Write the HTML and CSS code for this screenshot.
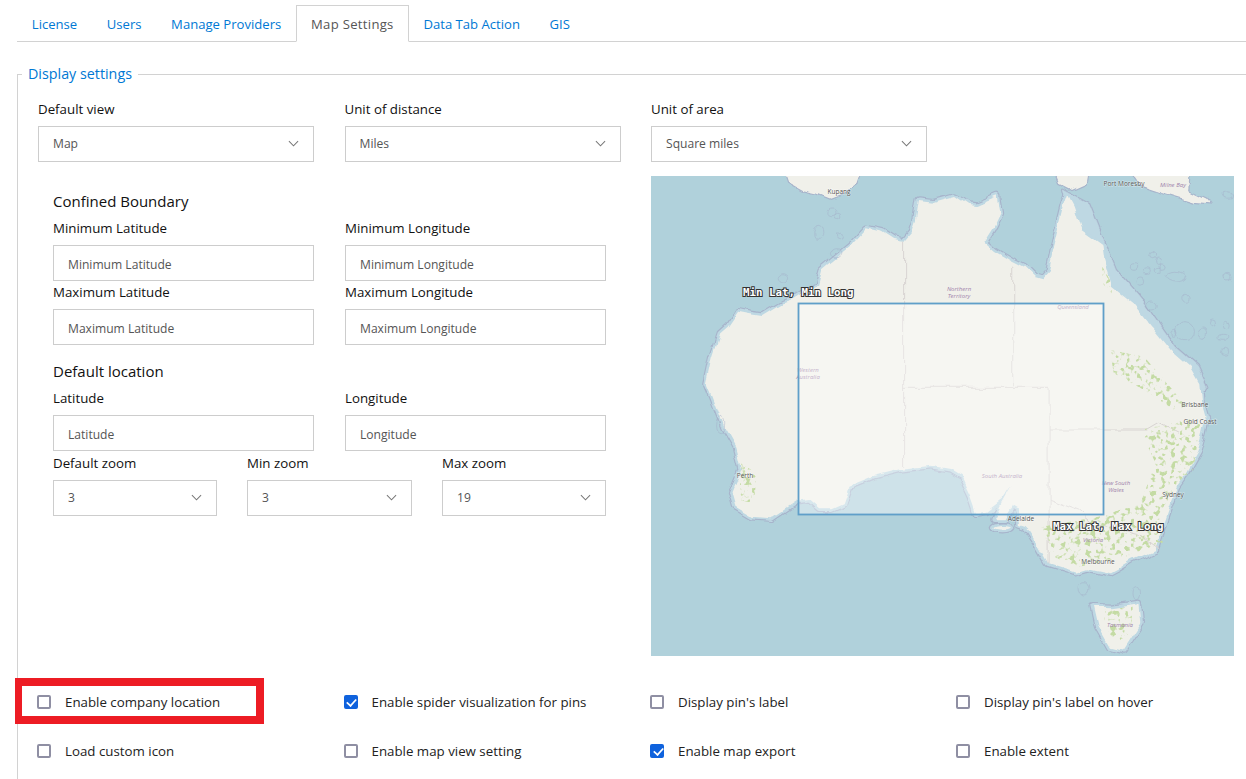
FILE: index.html
```html
<!DOCTYPE html>
<html lang="en">
<head>
<meta charset="utf-8">
<title>Map Settings</title>
<link rel="stylesheet" href="styles.css">
</head>
<body>
<nav class="tabs">
  <a class="tab">License</a>
  <a class="tab">Users</a>
  <a class="tab">Manage Providers</a>
  <a class="tab active">Map Settings</a>
  <a class="tab">Data Tab Action</a>
  <a class="tab">GIS</a>
</nav>
<fieldset class="panel">
  <legend class="legend">Display settings</legend>
  <div class="units">
    <div class="field wide"><label class="label">Default view</label>
      <div class="select"><span>Map</span><svg class="chev" viewBox="0 0 12 7"><path d="M1 1l5 5 5-5"/></svg></div></div>
    <div class="field wide"><label class="label">Unit of distance</label>
      <div class="select"><span>Miles</span><svg class="chev" viewBox="0 0 12 7"><path d="M1 1l5 5 5-5"/></svg></div></div>
    <div class="field wide"><label class="label">Unit of area</label>
      <div class="select"><span>Square miles</span><svg class="chev" viewBox="0 0 12 7"><path d="M1 1l5 5 5-5"/></svg></div></div>
  </div>
  <div class="middle">
    <div class="bounds">
      <h3 class="heading first">Confined Boundary</h3>
      <div class="pair">
        <div class="field"><label class="label">Minimum Latitude</label><input class="input" placeholder="Minimum Latitude"></div>
        <div class="field"><label class="label">Minimum Longitude</label><input class="input" placeholder="Minimum Longitude"></div>
      </div>
      <div class="pair">
        <div class="field"><label class="label">Maximum Latitude</label><input class="input" placeholder="Maximum Latitude"></div>
        <div class="field"><label class="label">Maximum Longitude</label><input class="input" placeholder="Maximum Longitude"></div>
      </div>
      <h3 class="heading">Default location</h3>
      <div class="pair">
        <div class="field"><label class="label">Latitude</label><input class="input" placeholder="Latitude"></div>
        <div class="field"><label class="label">Longitude</label><input class="input" placeholder="Longitude"></div>
      </div>
      <div class="zooms">
        <div class="field"><label class="label">Default zoom</label>
          <div class="select"><span>3</span><svg class="chev" viewBox="0 0 12 7"><path d="M1 1l5 5 5-5"/></svg></div></div>
        <div class="field"><label class="label">Min zoom</label>
          <div class="select"><span>3</span><svg class="chev" viewBox="0 0 12 7"><path d="M1 1l5 5 5-5"/></svg></div></div>
        <div class="field"><label class="label">Max zoom</label>
          <div class="select"><span>19</span><svg class="chev" viewBox="0 0 12 7"><path d="M1 1l5 5 5-5"/></svg></div></div>
      </div>
    </div>
    <svg class="map" viewBox="0 0 583 480" role="img" aria-label="Map of Australia">
      <defs>
        <filter id="rough" filterUnits="userSpaceOnUse" x="-30" y="-30" width="643" height="540" color-interpolation-filters="sRGB">
          <feTurbulence type="fractalNoise" baseFrequency="0.045" numOctaves="3" seed="4" result="n"/>
          <feDisplacementMap in="SourceGraphic" in2="n" scale="9" xChannelSelector="R" yChannelSelector="G"/>
          <feGaussianBlur stdDeviation="0.45"/>
        </filter>
        <filter id="speckle" filterUnits="userSpaceOnUse" x="-30" y="-30" width="643" height="540" color-interpolation-filters="sRGB">
          <feTurbulence type="fractalNoise" baseFrequency="0.2" numOctaves="2" seed="9"/>
          <feColorMatrix values="0 0 0 0 0  0 0 0 0 0  0 0 0 0 0  8 0 0 0 -4.3" result="mask"/>
          <feComposite in="SourceGraphic" in2="mask" operator="in"/>
          <feGaussianBlur stdDeviation="0.4"/>
        </filter>
      </defs>
      <rect class="sea" width="583" height="480"/>
      <g filter="url(#rough)">
        <g transform="scale(0.38023 0.33333) translate(-3 -18)">
          <g class="neighbours">
            <path d="M335 -60L365 40 400 62 440 72 475 88 515 70 550 40 580 -60Z"/>
            <path d="M1040 -60L1075 40 1110 60 1150 40 1165 -60Z"/>
            <path d="M1225 -60L1290 50 1350 72 1430 100 1480 105 1465 85 1420 60 1430 -60Z"/>
          </g>
          <path class="shelf" d="M1090 60L1155 100 1190 200 1225 300 1300 400 1380 530 1440 590 1465 650 1440 680 1300 500 1190 340 1120 200Z"/>
          <path class="halo-out" d="M185 490L205 470 232 425 262 432 298 438 350 402 375 392 440 345 450 300 490 262 530 225 570 175 610 185 640 207 670 212 690 185 700 150 708 90 745 95 800 78 835 105 862 108 915 82 922 130 905 170 880 215 905 240 950 270 985 290 1010 318 1030 325 1050 300 1060 250 1075 180 1090 110 1100 78 1115 110 1135 180 1190 225 1195 270 1215 350 1270 400 1320 470 1370 540 1420 590 1445 640 1450 700 1462 750 1455 790 1440 850 1410 910 1385 950 1355 1050 1330 1140 1270 1170 1235 1195 1210 1210 1150 1195 1120 1205 1050 1180 1020 1120 1000 1085 985 1068 968 1062 965 1020 950 1010 930 1045 905 1045 925 1000 952 945 925 990 885 1025 860 1030 845 980 820 920 790 900 740 890 660 900 590 920 525 950 510 1000 480 1015 445 1015 420 990 385 995 320 1045 270 1040 225 1010 215 970 240 900 225 830 195 770 165 680 150 640 165 560Z"/>
          <path class="shelf-in" d="M1090 60L1155 100 1190 200 1225 300 1300 400 1380 530 1440 590 1465 650 1440 680 1300 500 1190 340 1120 200Z"/>
          <path class="halo-in" d="M185 490L205 470 232 425 262 432 298 438 350 402 375 392 440 345 450 300 490 262 530 225 570 175 610 185 640 207 670 212 690 185 700 150 708 90 745 95 800 78 835 105 862 108 915 82 922 130 905 170 880 215 905 240 950 270 985 290 1010 318 1030 325 1050 300 1060 250 1075 180 1090 110 1100 78 1115 110 1135 180 1190 225 1195 270 1215 350 1270 400 1320 470 1370 540 1420 590 1445 640 1450 700 1462 750 1455 790 1440 850 1410 910 1385 950 1355 1050 1330 1140 1270 1170 1235 1195 1210 1210 1150 1195 1120 1205 1050 1180 1020 1120 1000 1085 985 1068 968 1062 965 1020 950 1010 930 1045 905 1045 925 1000 952 945 925 990 885 1025 860 1030 845 980 820 920 790 900 740 890 660 900 590 920 525 950 510 1000 480 1015 445 1015 420 990 385 995 320 1045 270 1040 225 1010 215 970 240 900 225 830 195 770 165 680 150 640 165 560Z"/>
          <path class="land" d="M185 490L205 470 232 425 262 432 298 438 350 402 375 392 440 345 450 300 490 262 530 225 570 175 610 185 640 207 670 212 690 185 700 150 708 90 745 95 800 78 835 105 862 108 915 82 922 130 905 170 880 215 905 240 950 270 985 290 1010 318 1030 325 1050 300 1060 250 1075 180 1090 110 1100 78 1115 110 1135 180 1190 225 1195 270 1215 350 1270 400 1320 470 1370 540 1420 590 1445 640 1450 700 1462 750 1455 790 1440 850 1410 910 1385 950 1355 1050 1330 1140 1270 1170 1235 1195 1210 1210 1150 1195 1120 1205 1050 1180 1020 1120 1000 1085 985 1068 968 1062 965 1020 950 1010 930 1045 905 1045 925 1000 952 945 925 990 885 1025 860 1030 845 980 820 920 790 900 740 890 660 900 590 920 525 950 510 1000 480 1015 445 1015 420 990 385 995 320 1045 270 1040 225 1010 215 970 240 900 225 830 195 770 165 680 150 640 165 560Z"/>
          <path class="halo-out" d="M1168 1310L1210 1312 1285 1300 1290 1360 1245 1440 1210 1430 1180 1370Z"/>
          <path class="halo-in" d="M1168 1310L1210 1312 1285 1300 1290 1360 1245 1440 1210 1430 1180 1370Z"/>
          <path class="land" d="M1168 1310L1210 1312 1285 1300 1290 1360 1245 1440 1210 1430 1180 1370Z"/>
          <ellipse class="halo-out" cx="925" cy="1072" rx="24" ry="7"/>
          <ellipse class="halo-in" cx="925" cy="1072" rx="24" ry="7"/>
          <ellipse class="land" cx="925" cy="1072" rx="24" ry="7"/>
          <g class="border">
            <path d="M670 212V890"/>
            <path d="M957 290V655"/>
            <path d="M670 655H1050V1180"/>
            <path d="M1050 780H1310L1340 760 1390 790"/>
            <path d="M1050 985L1130 1020 1170 1060 1280 1090 1340 1140"/>
          </g>
          <g class="reef">
            <ellipse cx="480" cy="127" rx="12" ry="10"/><ellipse cx="497" cy="138" rx="8" ry="8"/><ellipse cx="443" cy="190" rx="12" ry="18"/><ellipse cx="496" cy="198" rx="8" ry="8"/><ellipse cx="490" cy="248" rx="15" ry="12"/><ellipse cx="355" cy="322" rx="15" ry="14"/>
            <ellipse cx="1272" cy="285" rx="11" ry="10"/><ellipse cx="1310" cy="305" rx="9" ry="9"/><ellipse cx="1337" cy="303" rx="8" ry="8"/><ellipse cx="1325" cy="258" rx="8" ry="8"/><ellipse cx="1338" cy="275" rx="8" ry="8"/><ellipse cx="1347" cy="290" rx="8" ry="8"/><ellipse cx="1290" cy="332" rx="11" ry="14"/><ellipse cx="1385" cy="320" rx="28" ry="16"/><ellipse cx="1523" cy="320" rx="8" ry="10"/><ellipse cx="1520" cy="75" rx="10" ry="10"/><ellipse cx="1410" cy="385" rx="11" ry="15"/><ellipse cx="1323" cy="408" rx="14" ry="15"/><ellipse cx="1378" cy="490" rx="8" ry="9"/><ellipse cx="1405" cy="482" rx="22" ry="30"/><ellipse cx="1453" cy="488" rx="11" ry="14"/><ellipse cx="1477" cy="457" rx="8" ry="10"/><ellipse cx="1520" cy="465" rx="9" ry="11"/><ellipse cx="1507" cy="505" rx="13" ry="9"/><ellipse cx="1514" cy="547" rx="8" ry="9"/><ellipse cx="1147" cy="1255" rx="13" ry="20"/><ellipse cx="1278" cy="1270" rx="10" ry="20"/><ellipse cx="185" cy="763" rx="12" ry="22"/>
          </g>
        </g>
      </g>
      <g filter="url(#speckle)">
        <g class="green" transform="scale(0.38023 0.33333) translate(-3 -18)">
          <path d="M1190 290L1215 340 1215 370 1190 340Z"/>
          <path d="M1210 540L1300 560 1360 640 1420 720 1380 720 1300 660 1220 610Z"/>
          <path d="M1290 780L1450 740 1430 900 1380 960 1340 1030 1350 1120 1250 1160 1130 1190 1060 1160 1030 1070 1180 1040 1290 1000 1330 880Z"/>
          <path d="M1190 1320L1270 1310 1265 1380 1235 1425 1205 1390Z"/>
          <path d="M240 880L280 910 275 1000 235 990Z"/>
        </g>
      </g>
      <g class="green solid" transform="scale(0.38023 0.33333) translate(-3 -18)" filter="url(#rough)">
        <path d="M215 650L240 645 240 690 225 722 212 700Z"/>
        <path d="M350 945L358 945 356 980 346 980Z"/>
        <path d="M820 300L860 290 850 315 825 320Z"/>
        <path d="M1330 880L1375 895 1385 950 1345 995 1330 950Z"/>
      </g>
      <g class="place">
        <text x="188" y="18">Kupang</text>
        <text x="473" y="10">Port Moresby</text>
        <text x="544" y="231">Brisbane</text>
        <text x="549" y="248">Gold Coast</text>
        <text x="94" y="302">Perth</text>
        <text x="522" y="321">Sydney</text>
        <text x="370" y="345">Adelaide</text>
        <text x="447" y="388">Melbourne</text>
      </g>
      <g class="region">
        <text x="308" y="115">Northern</text>
        <text x="308" y="122">Territory</text>
        <text x="422" y="133">Queensland</text>
        <text x="157" y="196">Western</text>
        <text x="157" y="203">Australia</text>
        <text x="351" y="302">South Australia</text>
        <text x="465" y="309">New South</text>
        <text x="465" y="316">Wales</text>
        <text x="442" y="366">Victoria</text>
        <text x="469" y="451">Tasmania</text>
        <text x="522" y="11">Milne Bay</text>
      </g>
      <rect class="extent" x="147.5" y="127.5" width="305" height="211"/>
      <text class="corner" x="92" y="120">Min Lat, Min Long</text>
      <text class="corner" x="402" y="354">Max Lat, Max Long</text>
    </svg>
  </div>
  <div class="checks">
    <label class="check"><input type="checkbox" class="box"><span>Enable company location</span></label>
    <label class="check"><input type="checkbox" class="box" checked><span>Enable spider visualization for pins</span></label>
    <label class="check"><input type="checkbox" class="box"><span>Display pin's label</span></label>
    <label class="check"><input type="checkbox" class="box"><span>Display pin's label on hover</span></label>
    <label class="check"><input type="checkbox" class="box"><span>Load custom icon</span></label>
    <label class="check"><input type="checkbox" class="box"><span>Enable map view setting</span></label>
    <label class="check"><input type="checkbox" class="box" checked><span>Enable map export</span></label>
    <label class="check"><input type="checkbox" class="box"><span>Enable extent</span></label>
  </div>
</fieldset>
<div class="callout"></div>
</body>
</html>
```
FILE: styles.css
```css
* { box-sizing: border-box; }
html, body { height: 100%; }
body {
  margin: 0;
  padding: 5px 0 0 17px;
  overflow: hidden;
  position: relative;
  background: #fff;
  color: #1a1a1a;
  font-family: "Open Sans", "Liberation Sans", sans-serif;
  font-size: 13.3px;
}
.tabs {
  display: flex;
  height: 37px;
  border-bottom: 1px solid #d2d2d2;
  font-size: 13.1px;
}
.tab {
  padding: 0 14.8px;
  line-height: 38px;
  color: #0078d4;
}
.tab.active {
  color: #555;
  background: #fff;
  border: 1px solid #d2d2d2;
  border-bottom-color: #fff;
  height: 37px;
  padding: 0 14px;
  line-height: 36px;
  letter-spacing: .3px;
}
.panel {
  margin: 22px 0 0 0;
  padding: 15px 0 4px 20px;
  border: 1px solid #d2d2d2;
  border-right: 0;
  border-bottom: 0;
  min-width: 0;
}
.legend {
  margin-left: -16px;
  padding: 0 6px;
  color: #0078d4;
  font-size: 14.3px;
  line-height: 20px;
}
.units { display: flex; gap: 30.5px; }
.field { display: flex; flex-direction: column; }
.wide { width: 276px; }
.label { line-height: 20px; margin-bottom: 7px; color: #111; }
.select {
  height: 36px;
  border: 1px solid #cdcdcd;
  display: flex;
  align-items: center;
  justify-content: space-between;
  padding: 0 14px 2px;
  color: #555;
  font-size: 12.1px;
}
.chev { width: 11px; height: 7px; fill: none; stroke: #777; stroke-width: 1.1; }
.middle { display: flex; margin-top: 14px; }
.bounds { width: 613px; padding-left: 15px; }
.heading { margin: 15px 0 6px; font-weight: 400; font-size: 15px; line-height: 22px; color: #111; }
.heading.first { margin-top: 14px; }
.pair { display: grid; grid-template-columns: 261px 261px; column-gap: 31px; }
.pair + .pair { margin-top: 1px; }
.input {
  height: 36px;
  border: 1px solid #cdcdcd;
  padding: 2px 14px 0;
  font: inherit;
  font-size: 12.1px;
  outline: none;
  width: 100%;
}
.input::placeholder { color: #555; opacity: 1; }
.zooms { display: grid; grid-template-columns: 164px 165px 164px; column-gap: 30px; margin-top: 2px; }
.map { width: 583px; height: 480px; flex: none; display: block; }
.sea { fill: #b0d1db; }
.neighbours path { fill: #f0f0ea; stroke: #a7b4cb; stroke-width: 1.2; vector-effect: non-scaling-stroke; }
.shelf { fill: #a7b4cb; stroke: #a7b4cb; stroke-width: 3; stroke-linejoin: round; vector-effect: non-scaling-stroke; }
.shelf-in { fill: #bed8e3; stroke: #bed8e3; stroke-width: .6; vector-effect: non-scaling-stroke; }
.halo-out { fill: #a7b4cb; stroke: #a7b4cb; stroke-width: 7.5; stroke-linejoin: round; vector-effect: non-scaling-stroke; }
.halo-in { fill: #bed8e3; stroke: #bed8e3; stroke-width: 5.2; stroke-linejoin: round; vector-effect: non-scaling-stroke; }
.land { fill: #f0f0ea; }
.green { fill: #c4dba4; }
.green.solid { fill: #d3e2bd; }
.border path { fill: none; stroke: #d8d4d2; stroke-width: 1; vector-effect: non-scaling-stroke; }
.reef { fill: none; stroke: #a3aec8; stroke-width: 1.3; vector-effect: non-scaling-stroke; }
.place text { font-family: "Open Sans", sans-serif; font-size: 6.5px; fill: #555; text-anchor: middle; paint-order: stroke; stroke: #fff; stroke-width: 1px; stroke-opacity: .5; }
.region text { font-family: "Open Sans", sans-serif; font-size: 6px; font-style: italic; fill: #a083ab; text-anchor: middle; }
.extent { fill: rgba(255, 255, 255, .38); stroke: #5f9fc9; stroke-width: 1.8; }
.corner {
  font-family: "DejaVu Sans Mono", monospace;
  font-weight: 700;
  font-size: 10.8px;
  fill: #fff;
  stroke: #333;
  stroke-width: 2px;
  paint-order: stroke;
}
.checks {
  display: grid;
  grid-template-columns: 306.5px 306.5px 306px 306px;
  grid-auto-rows: 49px;
  margin: 21px 0 0 -1px;
}
.check { display: flex; align-items: center; gap: 14px; color: #222; }
.box {
  appearance: none;
  margin: 0;
  width: 14px;
  height: 14px;
  flex: none;
  border: 2px solid #8f8fa3;
  border-radius: 2px;
  background: #fff;
  position: relative;
}
.box:checked { background: #0f62dd; border-color: #0f62dd; }
.box:checked::after {
  content: "";
  position: absolute;
  left: 2.5px;
  top: -.5px;
  width: 5px;
  height: 9px;
  border: solid #fff;
  border-width: 0 2px 2px 0;
  transform: rotate(42deg) scale(.85);
}
.callout {
  position: absolute;
  left: 15px;
  top: 678px;
  width: 249px;
  height: 46px;
  border: 8px solid #ed1c24;
  border-left-width: 7px;
}
```
